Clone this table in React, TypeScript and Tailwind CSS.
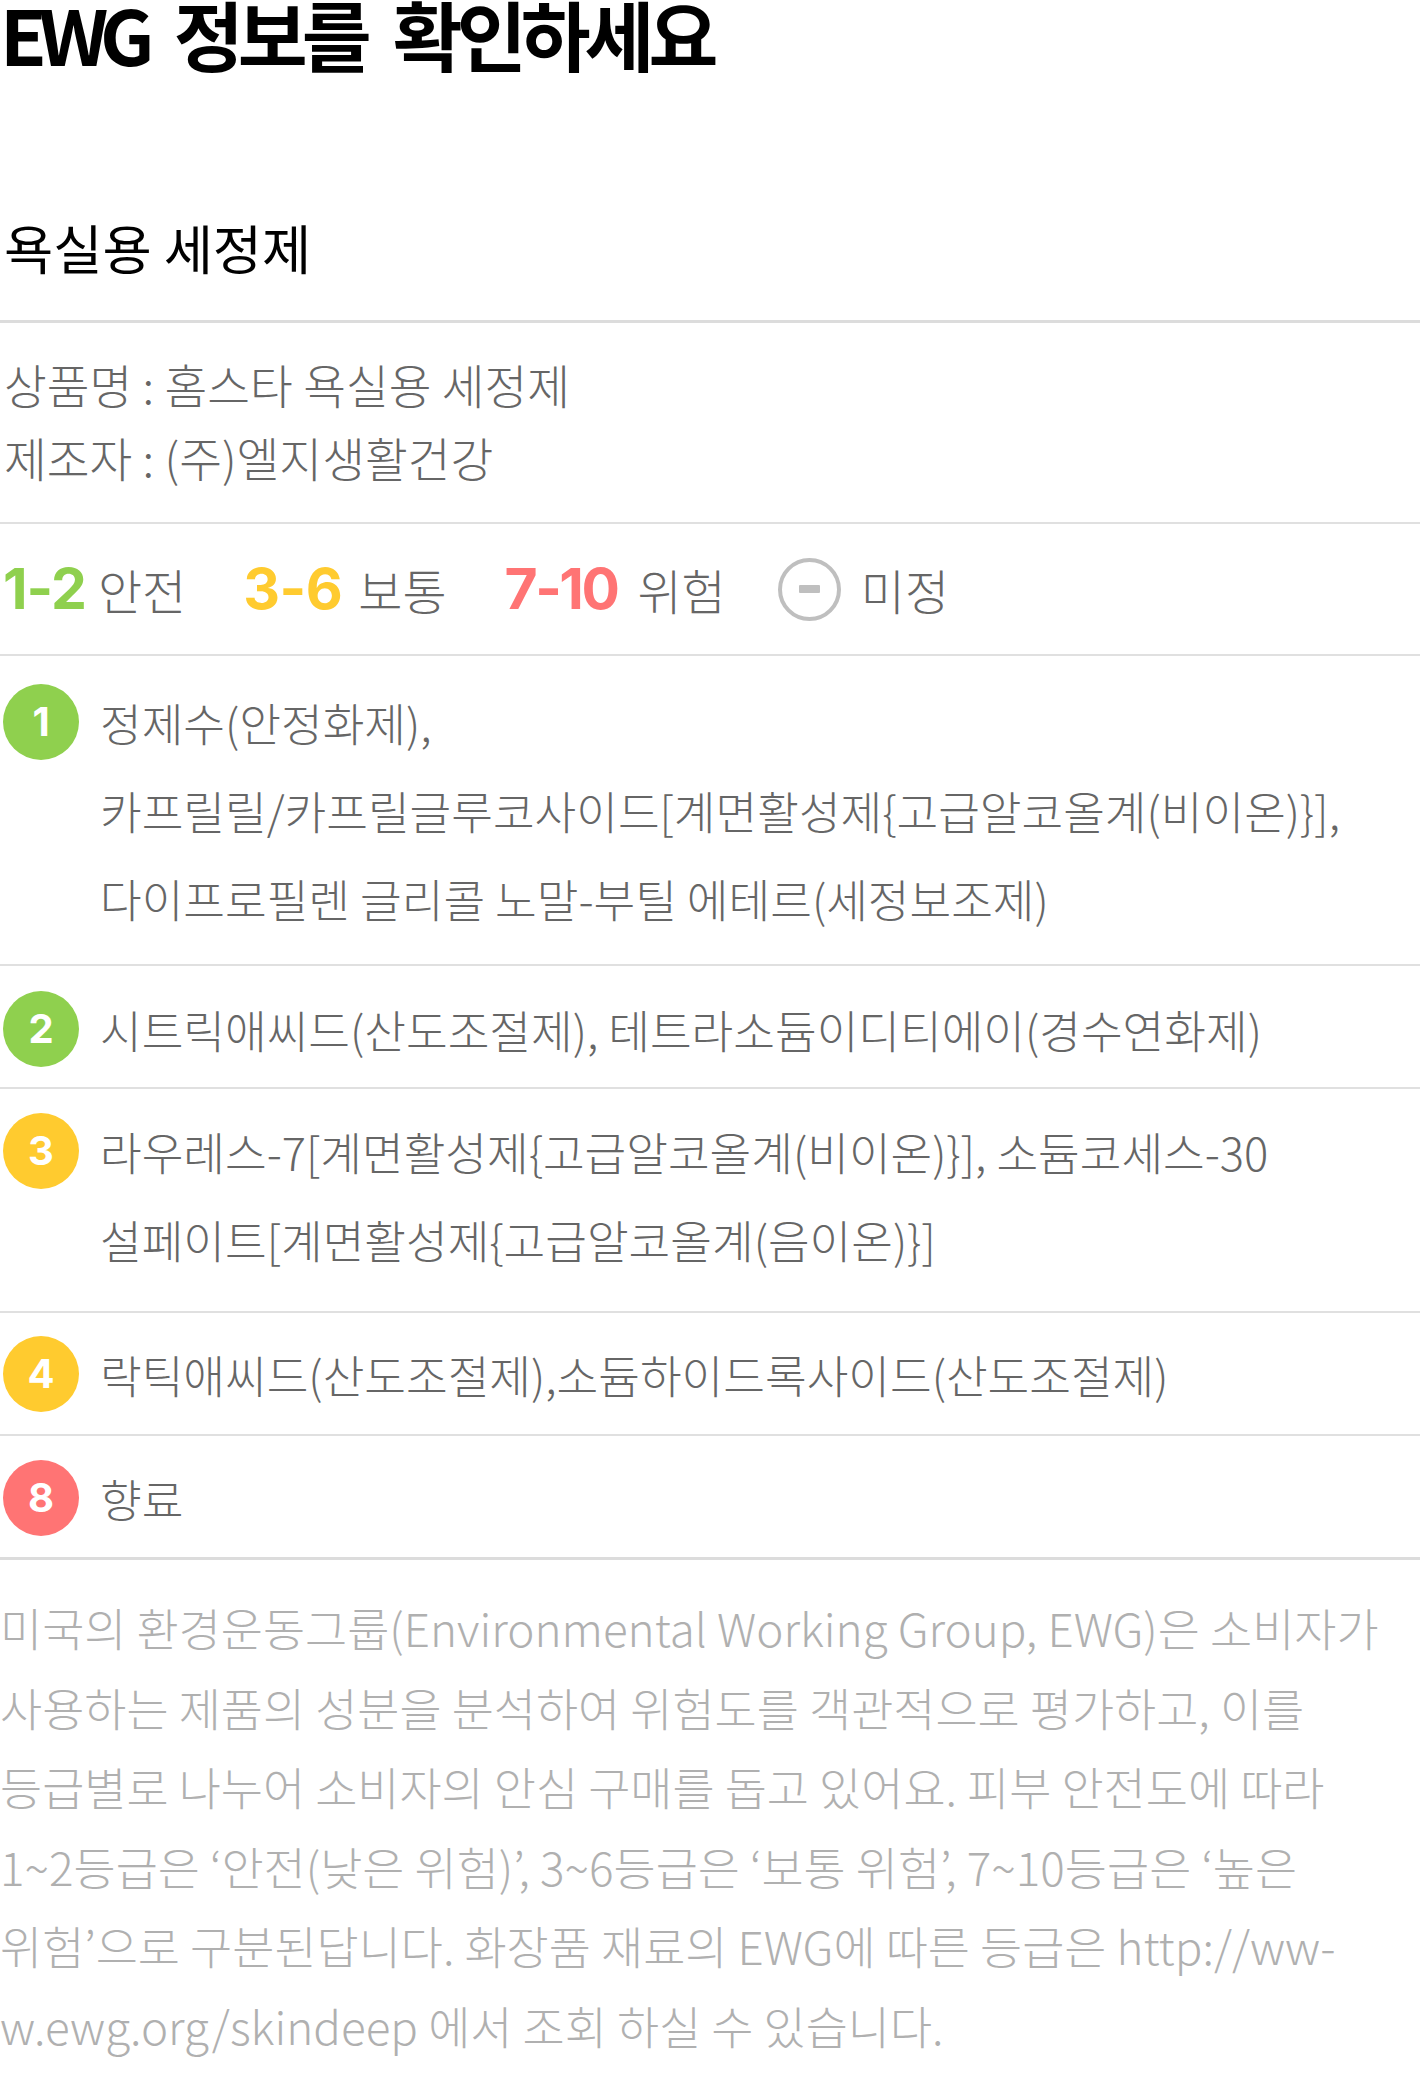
import React from 'react';

const KR = { fontFamily: '"Noto Sans CJK KR", "Noto Sans", sans-serif' };

type Row = {
  score: string;
  tone: 'green' | 'yellow' | 'red';
  lines: string[];
  pad: string;
};

const rows: Row[] = [
  {
    score: '1',
    tone: 'green',
    lines: [
      '정제수(안정화제),',
      '카프릴릴/카프릴글루코사이드[계면활성제{고급알코올계(비이온)}],',
      '다이프로필렌 글리콜 노말-부틸 에테르(세정보조제)',
    ],
    pad: 'pt-[22px] pb-[22px]',
  },
  {
    score: '2',
    tone: 'green',
    lines: ['시트릭애씨드(산도조절제), 테트라소듐이디티에이(경수연화제)'],
    pad: 'pt-[19px] pb-[14px]',
  },
  {
    score: '3',
    tone: 'yellow',
    lines: [
      '라우레스-7[계면활성제{고급알코올계(비이온)}], 소듐코세스-30',
      '설페이트[계면활성제{고급알코올계(음이온)}]',
    ],
    pad: 'pt-[18px] pb-[28px]',
  },
  {
    score: '4',
    tone: 'yellow',
    lines: ['락틱애씨드(산도조절제),소듐하이드록사이드(산도조절제)'],
    pad: 'pt-[17px] pb-[16px]',
  },
  {
    score: '8',
    tone: 'red',
    lines: ['향료'],
    pad: 'pt-[18px] pb-[15px]',
  },
];

const badgeColor = {
  green: 'bg-[#8fd04e]',
  yellow: 'bg-[#ffcb2f]',
  red: 'bg-[#ff7474]',
};

const description = [
  '미국의 환경운동그룹(Environmental Working Group, EWG)은 소비자가',
  '사용하는 제품의 성분을 분석하여 위험도를 객관적으로 평가하고, 이를',
  '등급별로 나누어 소비자의 안심 구매를 돕고 있어요. 피부 안전도에 따라',
  '1~2등급은 ‘안전(낮은 위험)’, 3~6등급은 ‘보통 위험’, 7~10등급은 ‘높은',
  '위험’으로 구분된답니다. 화장품 재료의 EWG에 따른 등급은 http://ww-',
  'w.ewg.org/skindeep 에서 조회 하실 수 있습니다.',
];

const Divider = ({ thick }: { thick?: boolean }) => (
  <div className={thick ? 'h-[3px] bg-[#dcdcdc]' : 'h-[2px] bg-[#e0e0e0]'} />
);

const IngredientRow = ({ row }: { row: Row }) => (
  <div className={`flex items-start ${row.pad}`}>
    <div
      className={`mt-[6px] ml-[3px] flex h-[76px] w-[76px] shrink-0 items-center justify-center rounded-full ${badgeColor[row.tone]}`}
    >
      <span className="font-['Inter'] text-[40px] font-bold leading-none text-white">{row.score}</span>
    </div>
    <div className="ml-[21px] text-[45.3px] font-light leading-[88px] text-[#666666]">
      {row.lines.map((line) => (
        <div key={line} className="whitespace-nowrap">
          {line}
        </div>
      ))}
    </div>
  </div>
);

export default function App() {
  return (
    <div className="w-[1420px] overflow-hidden bg-white" style={KR}>
      <h1 className="-mt-[5px] text-[76px] font-bold leading-none tracking-[-6px] [word-spacing:16px] text-black">
        <span className="tracking-[-8px]">EWG</span> 정보를 확인하세요
      </h1>

      <h2 className="mt-[146px] pl-[4px] text-[53.5px] font-normal leading-[60px] text-black">
        욕실용 세정제
      </h2>

      <div className="mt-[43px]">
        <Divider thick />
      </div>

      <div className="pl-[4px] pt-[24px] pb-[29px] text-[46.5px] font-light leading-[73px] text-[#666666]">
        <div>상품명 : 홈스타 욕실용 세정제</div>
        <div>제조자 : (주)엘지생활건강</div>
      </div>

      <Divider />

      <div className="flex h-[130px] items-center pl-[3px]">
        <div className="flex items-center gap-[12px]">
          <span className="font-['Inter'] text-[57px] font-bold tracking-[-1px] text-[#8fd04e]">1-2</span>
          <span className="text-[48px] font-light text-[#666666]">안전</span>
        </div>
        <div className="ml-[57px] flex items-center gap-[16px]">
          <span className="font-['Inter'] text-[57px] font-bold tracking-[-0.5px] text-[#ffcb2f]">3-6</span>
          <span className="text-[48px] font-light text-[#666666]">보통</span>
        </div>
        <div className="ml-[58px] flex items-center gap-[20px]">
          <span className="font-['Inter'] text-[57px] font-bold tracking-[-2.5px] text-[#ff7474]">7-10</span>
          <span className="text-[48px] font-light text-[#666666]">위험</span>
        </div>
        <div className="ml-[52px] flex items-center gap-[20px]">
          <div className="flex h-[63px] w-[63px] items-center justify-center rounded-full border-[4px] border-[#bfbfbf]">
            <div className="h-[8px] w-[21px] rounded-[1px] bg-[#bfbfbf]" />
          </div>
          <span className="text-[48px] font-light text-[#666666]">미정</span>
        </div>
      </div>

      <Divider />

      {rows.map((row, i) => (
        <div key={row.score + i}>
          <IngredientRow row={row} />
          <Divider thick={i === rows.length - 1} />
        </div>
      ))}

      <div className="pt-[28px] text-[45.8px] font-light leading-[79.5px] text-[#b0b0b0]">
        {description.map((line) => (
          <div key={line} className="whitespace-nowrap">
            {line}
          </div>
        ))}
      </div>
    </div>
  );
}
